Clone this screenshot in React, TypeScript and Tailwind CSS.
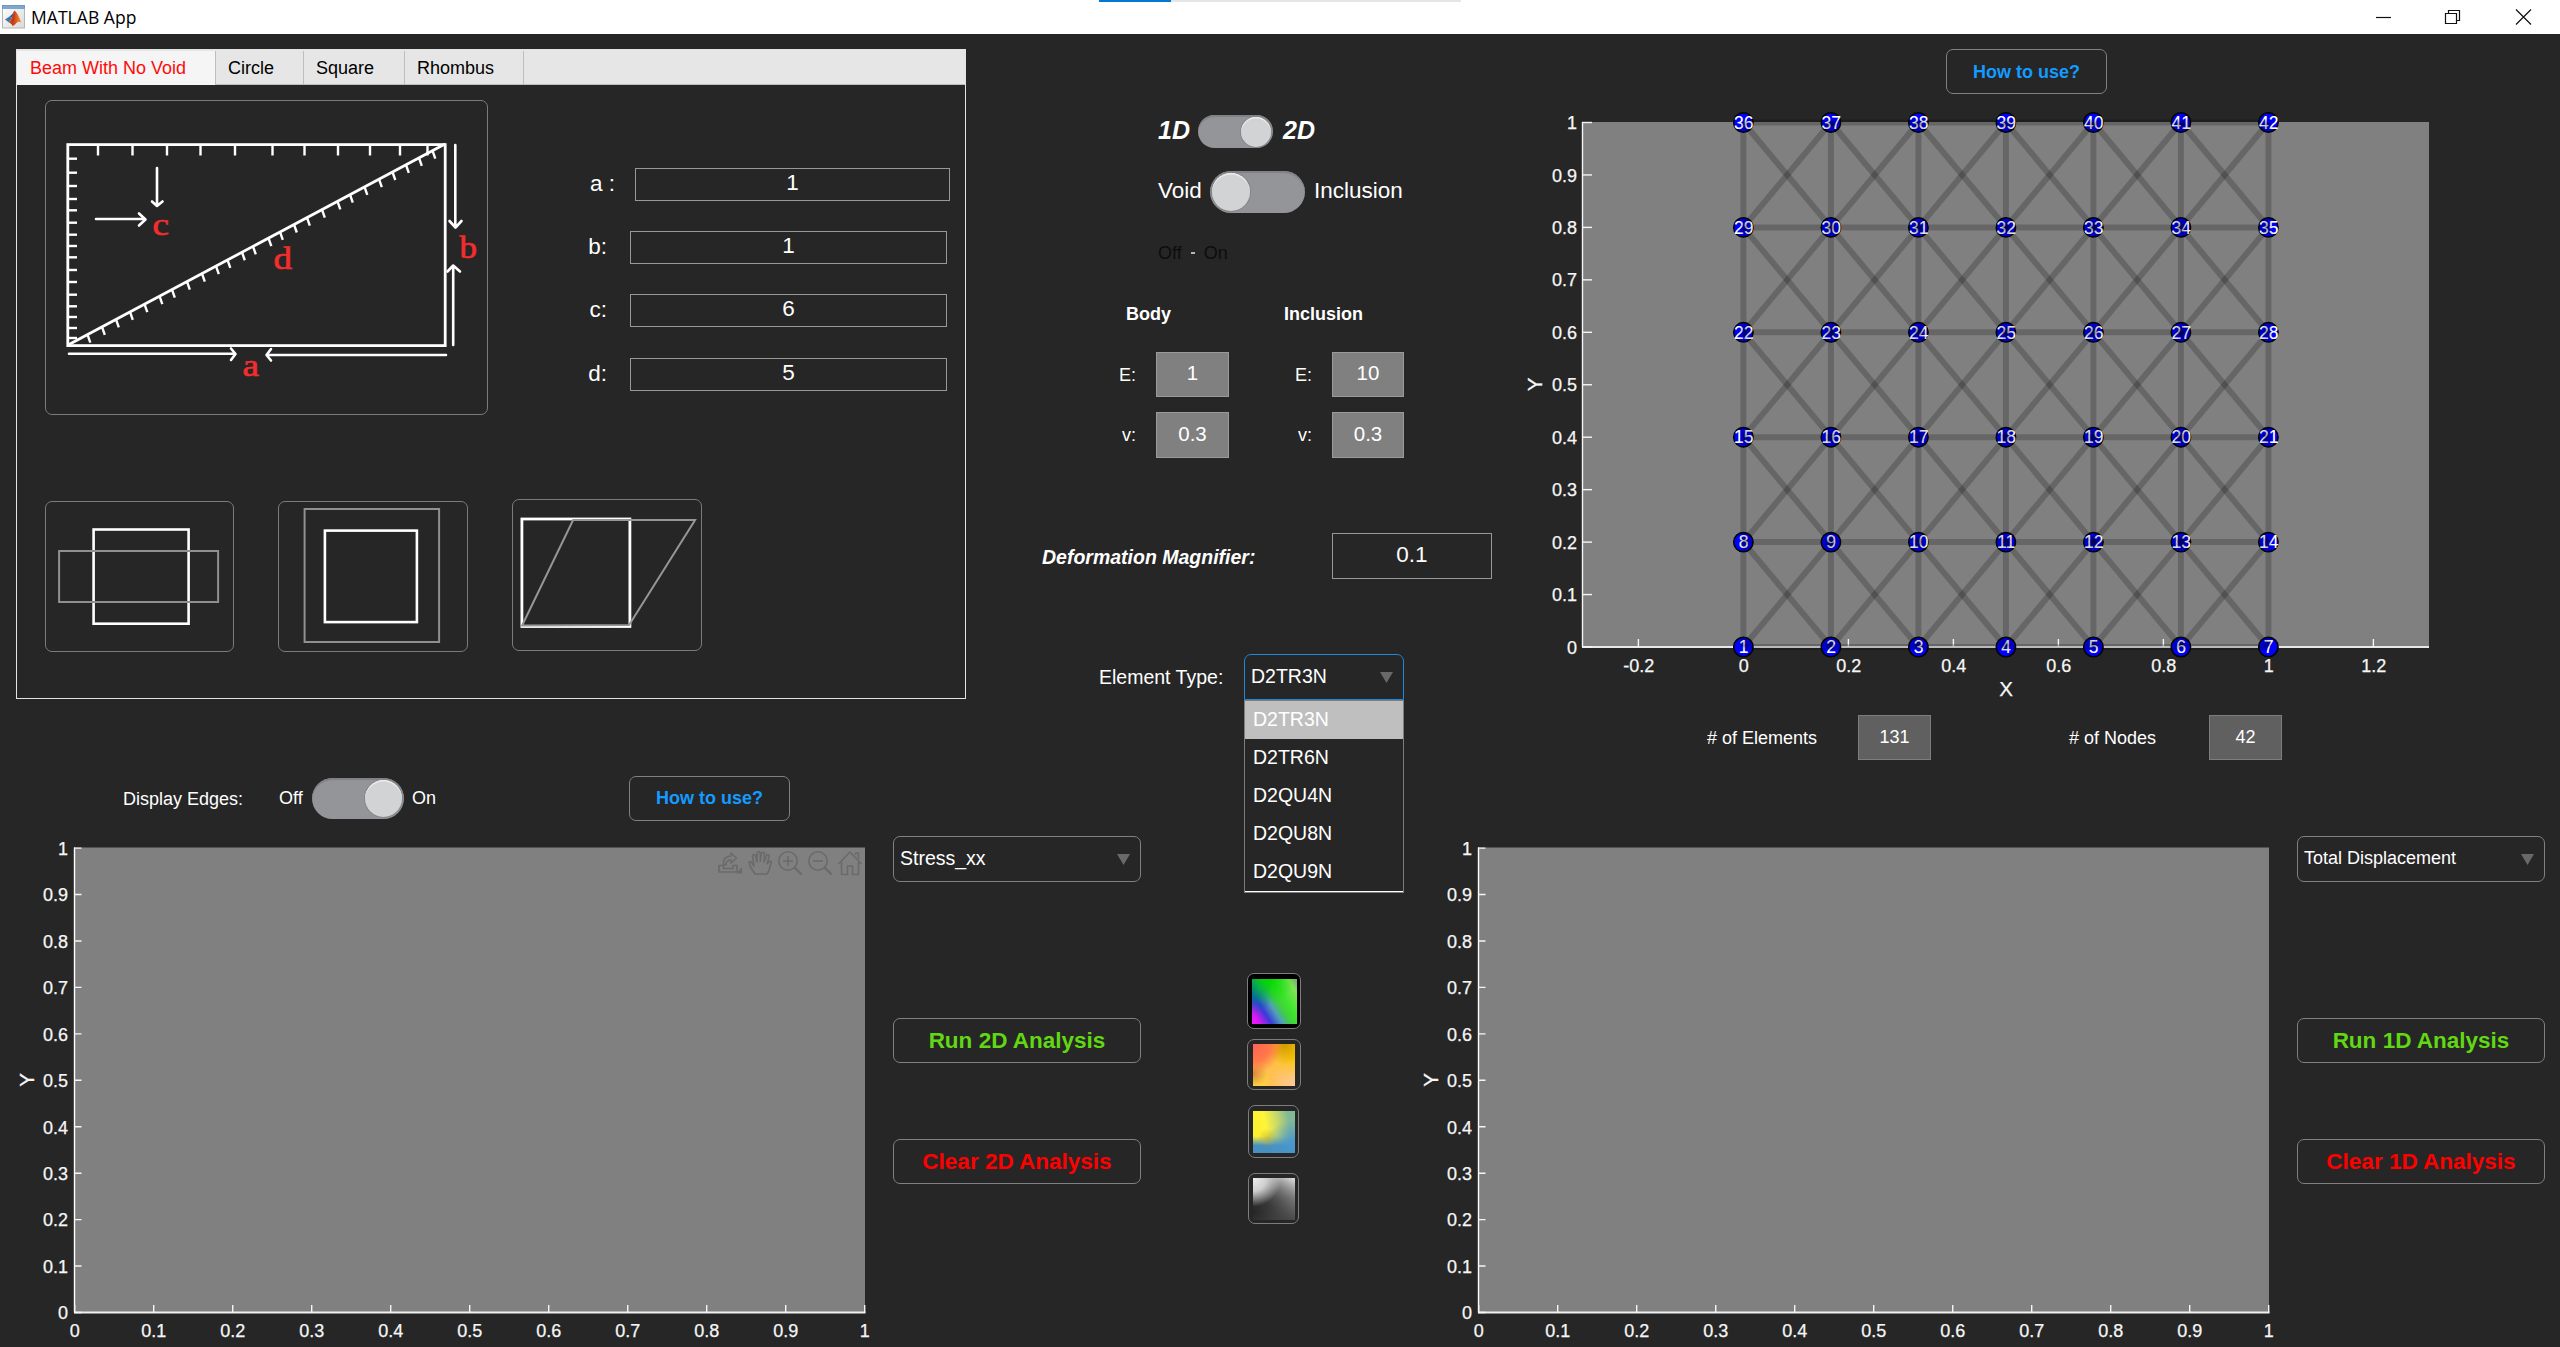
import React from "react";

const FONT = '"Liberation Sans", Arial, sans-serif';

/* ---------- window chrome ---------- */

function MatlabIcon() {
  return (
    <svg className="ml-[2px] h-[24px] w-[24px] shrink-0" viewBox="0 0 24 24">
      <defs>
        <linearGradient id="pg" x1="0" y1="0" x2="1" y2="1">
          <stop offset="0" stopColor="#ffffff" />
          <stop offset="1" stopColor="#d9d9d9" />
        </linearGradient>
        <linearGradient id="mb" x1="0" y1="0" x2="1" y2="0">
          <stop offset="0" stopColor="#f6a21c" />
          <stop offset="0.4" stopColor="#d2421c" />
          <stop offset="1" stopColor="#f39a2b" />
        </linearGradient>
      </defs>
      <rect x="0.5" y="0.5" width="22" height="22.5" fill="url(#pg)" stroke="#b5b5b5" />
      <rect x="0.5" y="0.5" width="22" height="3" fill="#79a8d2" stroke="#5b8dbb" strokeWidth="0.6" />
      <path d="M3 14.5 L7.5 11.5 L10 13 L7 17.5 Z" fill="#3a78b5" />
      <path d="M7.5 11.5 Q10.5 10 12.5 5.5 L10.5 13 Z" fill="#2c5f94" />
      <path d="M7 17.5 Q9.5 14.5 12.5 5.5 Q15 6.5 19.5 18 Q16.5 15.5 14.5 18 Q12.5 20.5 10.8 21 Q9.6 18 7 17.5Z" fill="url(#mb)" />
      <path d="M12.5 5.5 Q13 12 10.8 21 Q9.6 18 7 17.5 Q10.5 14 12.5 5.5Z" fill="#b5301a" opacity="0.75" />
    </svg>
  );
}

function TitleBar() {
  return (
    <header className="relative flex h-[34px] shrink-0 items-center bg-white text-black">
      <MatlabIcon />
      <span
        className="ml-[5px] text-[17.5px] leading-[34px] tracking-[0.05px]"
        style={{ fontFamily: '"Open Sans", "Noto Sans", sans-serif' }}
      >
        MATLAB App
      </span>
      <div className="absolute left-[1099px] top-0 flex h-[2px] w-[362px] bg-[#e5e5e5]">
        <div className="w-[72px] bg-[#0078d7]" />
      </div>
      <div className="ml-auto flex h-[34px] items-center">
        <svg className="h-[34px] w-[200px]" viewBox="2360 0 200 34" fill="none" stroke="#111" strokeWidth="1.2">
          <path d="M2376 17.5H2391" />
          <path d="M2445.5 13.5H2456.5V23.5H2445.5Z M2448.5 13.5V10.5H2459.5V20.5H2456.5" />
          <path d="M2516 9.5L2531 24.5M2531 9.5L2516 24.5" />
        </svg>
      </div>
    </header>
  );
}

/* ---------- shared controls ---------- */

function ActionButton({ children, className }: { children: React.ReactNode; className: string }) {
  return (
    <button
      className={`flex h-[45px] items-center justify-center rounded-[7px] border border-[#808080] font-bold ${className}`}
    >
      {children}
    </button>
  );
}

function Triangle({ className = "" }: { className?: string }) {
  return (
    <svg className={`h-[11px] w-[13px] ${className}`} viewBox="0 0 13 11">
      <path d="M0 0H13L6.5 11Z" fill="#696969" />
    </svg>
  );
}

function Toggle({ on, track, knob }: { on: boolean; track: string; knob: string }) {
  return (
    <div
      className={`flex shrink-0 items-center rounded-full bg-[#949599] px-[2px] shadow-[inset_0_2px_1px_#808184] ${track} ${on ? "justify-end" : "justify-start"}`}
    >
      <div className={`rounded-full bg-[#d2d3d5] shadow-[inset_0_1.5px_0.5px_#ececec,0_0_0_1px_#85868a] ${knob}`} />
    </div>
  );
}

function ValueBox({ value, className }: { value: string; className: string }) {
  return <div className={`flex shrink-0 items-center justify-center border ${className}`}>{value}</div>;
}

/* ---------- geometry panel ---------- */

const topTicks = [98, 132.5, 167, 200.5, 235, 272.5, 304.5, 338, 370, 400, 427.5];
const leftTicks = [158.7, 172.7, 186, 199, 210.3, 222.7, 234.7, 246, 257.3, 270, 282, 294.7, 306.3, 317, 328, 338];
const diagonalTicks = [
  87.5, 102, 116, 130, 144.5, 159.5, 172, 187, 202, 216, 227.5, 242, 253, 268.5, 280, 294, 307, 322, 337.5, 350, 364.5,
  379, 392.5, 406, 419, 432.5,
];

function BeamDiagram() {
  const diagY = (x: number) => 345 - ((x - 68) * 201) / 377;
  return (
    <svg className="h-full w-full" viewBox="46 101 441 313" fill="none" stroke="#fff" strokeWidth="2.4">
      <rect x="67.8" y="144.6" width="377.4" height="201" strokeWidth="2.8" />
      <path d="M68 345L445 144" strokeWidth="2.8" />
      {topTicks.map((x) => (
        <path key={x} d={`M${x} 145V155.5`} />
      ))}
      {leftTicks.map((y) => (
        <path key={y} d={`M68 ${y}H77`} />
      ))}
      {diagonalTicks.map((x) => (
        <path key={x} d={`M${x} ${diagY(x)}l2.8 8`} />
      ))}
      <g strokeWidth="2.6" strokeLinecap="round" strokeLinejoin="round">
        <path d="M157 168V205M152 201.5L157 206L162.5 201.5" />
        <path d="M96 219H145M139 213.5L145.5 219.5L139 225.5" />
        <path d="M455.3 145V227M449.5 221L455.5 227.5L461.5 221" />
        <path d="M453.2 345V266M447.5 271.5L453.2 265.5L460 271.5" />
        <path d="M69 353.7H234M231 348.5L235.5 354L231 360" />
        <path d="M446 355H268M271 349L266.5 355L271 360.5" />
      </g>
      <g fill="#f22d2d" stroke="#f22d2d" strokeWidth="0.7" fontFamily='"Liberation Serif", serif' fontSize="32">
        <text x="152.5" y="234.5" textLength="16.5" lengthAdjust="spacingAndGlyphs">c</text>
        <text x="273.5" y="268.5" textLength="18.5" lengthAdjust="spacingAndGlyphs">d</text>
        <text x="459.5" y="257.5" textLength="17.5" lengthAdjust="spacingAndGlyphs">b</text>
        <text x="242.5" y="376" textLength="16.5" lengthAdjust="spacingAndGlyphs">a</text>
      </g>
    </svg>
  );
}

const card = "rounded-[7px] border border-[#7b7b7b]";

function GeometryPanel() {
  const fields = [
    { label: "a :", value: "1", row: "", labelBox: "w-[127px]", box: "ml-[20px] w-[315px]" },
    { label: "b:", value: "1", row: "mt-[30px]", labelBox: "w-[119px]", box: "ml-[23px] w-[317px]" },
    { label: "c:", value: "6", row: "mt-[30px]", labelBox: "w-[119px]", box: "ml-[23px] w-[317px]" },
    { label: "d:", value: "5", row: "mt-[31px]", labelBox: "w-[119px]", box: "ml-[23px] w-[317px]" },
  ];
  return (
    <section className="ml-[16px] mt-[15px] h-[650px] w-[950px] shrink-0 border border-[#e3e3e3]">
      <div className="flex h-[35px] border-b border-[#bdbdbd] bg-[#e6e6e6] pt-px text-[18px] text-black">
        <div className="-mb-px flex w-[198px] items-center bg-[#f5f5f5] pl-[13px] pt-px">
          <span className="text-[#ff0a0a]">Beam With No Void</span>
        </div>
        <div className="flex w-[89px] items-center border-x border-[#bdbdbd] pl-[12px] pt-px">Circle</div>
        <div className="flex w-[101px] items-center border-r border-[#bdbdbd] pl-[12px] pt-px">Square</div>
        <div className="flex w-[119px] items-center border-r border-[#bdbdbd] pl-[12px] pt-px">Rhombus</div>
      </div>
      <div className="flex pt-[15px]">
        <div className={`ml-[28px] h-[315px] w-[443px] shrink-0 ${card}`}>
          <BeamDiagram />
        </div>
        <div className="flex flex-col pt-[68px] text-[22.5px]">
          {fields.map((f) => (
            <div key={f.label} className={`flex h-[33px] items-center ${f.row}`}>
              <span className={`pb-[1px] text-right ${f.labelBox}`}>{f.label}</span>
              <ValueBox value={f.value} className={`h-[33px] border-[#989898] pb-[3px] ${f.box}`} />
            </div>
          ))}
        </div>
      </div>
      <div className="mt-[84px] flex items-start">
        <div className={`ml-[28px] mt-[2px] h-[151px] w-[189px] ${card}`}>
          <svg className="h-full w-full" viewBox="46.6 502 187 149" fill="none">
            <rect x="94.2" y="529.5" width="95" height="94.2" stroke="#fff" strokeWidth="2.6" />
            <rect x="59.7" y="551" width="159" height="51" stroke="#909090" strokeWidth="2" />
          </svg>
        </div>
        <div className={`ml-[44px] mt-[2px] h-[151px] w-[190px] ${card}`}>
          <svg className="h-full w-full" viewBox="279.4 502 188 149" fill="none">
            <rect x="305" y="509" width="134.5" height="133" stroke="#909090" strokeWidth="2" />
            <rect x="325.3" y="530.6" width="92" height="91.5" stroke="#fff" strokeWidth="2.6" />
          </svg>
        </div>
        <div className={`ml-[44px] h-[152px] w-[190px] ${card}`}>
          <svg className="h-full w-full" viewBox="513.4 500 188 150" fill="none">
            <rect x="522.3" y="519" width="108" height="107.5" stroke="#fff" strokeWidth="2.8" />
            <path d="M522.5 625.5L573.5 520H695.5L629.5 625Z" stroke="#969696" strokeWidth="2" />
          </svg>
        </div>
      </div>
    </section>
  );
}

/* ---------- centre settings ---------- */

function MaterialRow({ label, left, right, className }: { label: string; left: string; right: string; className: string }) {
  const box = "h-full border-[#9a9a9a] bg-[#808080] pb-[2px] text-[20.5px]";
  return (
    <div className={`flex items-center text-[18px] ${className}`}>
      <span className="w-[170px] pt-px text-right">{label}</span>
      <ValueBox value={left} className={`ml-[20px] w-[73px] ${box}`} />
      <span className="w-[83px] pt-px text-right">{label}</span>
      <ValueBox value={right} className={`ml-[20px] w-[72px] ${box}`} />
    </div>
  );
}

function SettingsColumn() {
  const options = ["D2TR3N", "D2TR6N", "D2QU4N", "D2QU8N", "D2QU9N"];
  return (
    <section className="flex w-[534px] shrink-0 flex-col pt-[81px]">
      <div className="flex h-[33px] items-center text-[25px] font-bold italic">
        <span className="ml-[192px] w-[40px] pb-px">1D</span>
        <Toggle on track="h-[33px] w-[75px]" knob="h-[30px] w-[30px]" />
        <span className="ml-[10px] pb-px">2D</span>
      </div>
      <div className="mt-[23px] flex h-[42px] items-center text-[22.5px]">
        <span className="ml-[192px] w-[52px] pb-[2px]">Void</span>
        <Toggle on={false} track="h-[42px] w-[95px]" knob="h-[38px] w-[38px]" />
        <span className="ml-[9px] pb-[2px]">Inclusion</span>
      </div>
      <div className="mt-[30px] flex h-[20px] items-center text-[18px] text-[#0d0d0d]">
        <span className="ml-[192px]">Off</span>
        <div className="ml-[9px] h-[2px] w-[4px] bg-[#b4b4b6]" />
        <span className="ml-[9px]">On</span>
      </div>
      <div className="mt-[41px] flex h-[20px] items-center text-[18px] font-bold">
        <span className="ml-[160px] w-[158px]">Body</span>
        <span>Inclusion</span>
      </div>
      <MaterialRow label="E:" left="1" right="10" className="mt-[28px] h-[45px]" />
      <MaterialRow label="v:" left="0.3" right="0.3" className="mt-[15px] h-[46px]" />
      <div className="mt-[75px] flex h-[46px] items-center">
        <span className="ml-[76px] w-[290px] pt-[3px] text-[19.5px] font-bold italic">Deformation Magnifier:</span>
        <ValueBox value="0.1" className="h-[46px] w-[160px] border-[#989898] pb-[2px] text-[22.5px]" />
      </div>
      <div className="mt-[75px] flex h-[46px] items-center text-[19.5px]">
        <span className="ml-[133px] w-[145px] pt-[2px]">Element Type:</span>
        <div className="relative h-[46px] w-[160px]">
          <div className="flex h-[46px] items-center justify-between rounded-t-[7px] border border-[#2187d8] pl-[6px] pr-[10px]">
            <span>D2TR3N</span>
            <Triangle />
          </div>
          <ul className="absolute left-0 top-[46px] z-10 h-[193px] w-[160px] border border-[#7d7d7d] bg-[#262626]">
            {options.map((o, i) => (
              <li key={o} className={`flex h-[38px] items-center pb-px pl-[8px] ${i === 0 ? "bg-[#bfbfbf]" : ""}`}>
                {o}
              </li>
            ))}
            <li className="h-px bg-white" />
          </ul>
        </div>
      </div>
    </section>
  );
}

/* ---------- charts ---------- */

function TickText({ x, y, anchor, children }: { x: number; y: number; anchor: "end" | "middle"; children: React.ReactNode }) {
  return (
    <text x={x} y={y} textAnchor={anchor} fill="#f6f6f6" stroke="#f6f6f6" strokeWidth="0.25" fontSize="18" fontFamily={FONT}>
      {children}
    </text>
  );
}

const tenths = [0, 0.1, 0.2, 0.3, 0.4, 0.5, 0.6, 0.7, 0.8, 0.9, 1];

function MeshChart() {
  const px = (v: number) => 1743.4 + v * 525;
  const py = (v: number) => 647 - v * 524.5;
  const nodes: { id: number; x: number; y: number }[] = [];
  const edges: number[][] = [];
  for (let r = 0; r < 6; r++) {
    for (let c = 0; c < 7; c++) {
      const x = px(c / 6);
      const y = py(r / 5);
      nodes.push({ id: r * 7 + c + 1, x, y });
      if (c < 6) edges.push([x, y, px((c + 1) / 6), y]);
      if (r < 5) edges.push([x, y, x, py((r + 1) / 5)]);
      if (c < 6 && r < 5) {
        edges.push([x, y, px((c + 1) / 6), py((r + 1) / 5)]);
        edges.push([px((c + 1) / 6), y, x, py((r + 1) / 5)]);
      }
    }
  }
  return (
    <svg className="h-[609px] w-[1060px] shrink-0" viewBox="1500 94 1060 609">
      <rect x="1582" y="122" width="847" height="525" fill="#808080" />
      <path d="M1582.5 122V647" stroke="#f5f5f5" strokeWidth="1.4" />
      <path d="M1582 647H2429" stroke="#e8e8e8" strokeWidth="1.8" />
      {tenths.map((t) => (
        <g key={t}>
          <path d={`M1582 ${py(t)}h10`} stroke="#f5f5f5" strokeWidth="1.4" />
          <TickText x={1577} y={py(t) + 6.6} anchor="end">{t}</TickText>
        </g>
      ))}
      {[-0.2, 0, 0.2, 0.4, 0.6, 0.8, 1, 1.2].map((t) => (
        <g key={t}>
          <path d={`M${px(t)} 647v-8`} stroke="#f5f5f5" strokeWidth="1.4" />
          <TickText x={px(t) + 0.4} y={671.5} anchor="middle">{t}</TickText>
        </g>
      ))}
      <text x="2006" y="696" textAnchor="middle" fill="#f6f6f6" stroke="#f6f6f6" strokeWidth="0.25" fontSize="20.5" fontFamily={FONT}>X</text>
      <text transform="translate(1542 384.5) rotate(-90)" textAnchor="middle" fill="#f6f6f6" stroke="#f6f6f6" strokeWidth="0.25" fontSize="20.5" fontFamily={FONT}>Y</text>
      {nodes.map((n) => (
        <g key={n.id}>
          <circle cx={n.x} cy={n.y} r="9.7" fill="#0000ff" stroke="#000" strokeWidth="1.5" />
          <text x={n.x + 0.3} y={n.y + 6.2} textAnchor="middle" fill="#fff" fontSize="17.5" fontFamily={FONT}>{n.id}</text>
        </g>
      ))}
      {edges.map((e, i) => (
        <path key={i} d={`M${e[0]} ${e[1]}L${e[2]} ${e[3]}`} stroke="#000" strokeOpacity="0.2" strokeWidth="6" />
      ))}
      {nodes.map((n) => (
        <text key={n.id} aria-hidden x={n.x + 0.3} y={n.y + 6.2} textAnchor="middle" fill="#fff" fillOpacity="0.35" fontSize="17.5" fontFamily={FONT}>
          {n.id}
        </text>
      ))}
    </svg>
  );
}

function ChartToolbar() {
  return (
    <g fill="none" stroke="#6a6a6a" strokeWidth="1.6" strokeLinejoin="round">
      <path d="M719 865.5H723.5V868.5H733V865.5H737V872H719Z" />
      <path d="M723.5 864C723 858.5 727 856 731 856V853L736.5 858L731 863V860C727.5 860 726 862 726 865Z" />
      <path d="M742 867V873.5H736Z" fill="#6a6a6a" stroke="none" />
      <path d="M755 874L750.5 867L749 862.5C749.5 861 751 861.5 752 863L754 866L752.5 856C753 854 755 854 755.5 856L757 862V853.5C757.5 851 760 851 760.3 853.5V861.5L761.5 853.5C762 851.5 764.5 852 764.5 854L764 862L766.5 855.5C767 854 769.5 854.5 769 857L767 864L769.5 861.5C771 860.5 772 862 771 863.5C770 866 769 872 767 874Z" />
      <circle cx="788" cy="861" r="9.2" />
      <path d="M783 861H793M788 856V866" />
      <path d="M794.5 867.5L801.5 874.5" strokeWidth="2.4" />
      <circle cx="818" cy="861" r="9.2" />
      <path d="M813 861H823" />
      <path d="M824.5 867.5L831.5 874.5" strokeWidth="2.4" />
      <path d="M838.5 864L850 852L861.5 864M841.5 862V874.5H847.5V866H852.5V874.5H858.5V862M855.5 855V853H858.5V859" />
    </g>
  );
}

function EmptyChart({ toolbar = false }: { toolbar?: boolean }) {
  const px = (v: number) => 74.7 + v * 790;
  const py = (v: number) => 1312.5 - v * 464.4;
  return (
    <svg className="h-[526px] w-[893px] shrink-0" viewBox="0 821 893 526">
      <rect x="74" y="847.5" width="791" height="465" fill="#808080" />
      <path d="M74.5 847.5V1312.5" stroke="#fff" strokeWidth="1.4" />
      <path d="M74 1312.5H865.5" stroke="#f0f0f0" strokeWidth="1.8" />
      {tenths.map((t) => (
        <g key={t}>
          <path d={`M74 ${py(t)}h7.5M${px(t)} 1312.5v-7.5`} stroke="#f5f5f5" strokeWidth="1.4" />
          <TickText x={68} y={py(t) + 6.8} anchor="end">{t}</TickText>
          <TickText x={px(t)} y={1337} anchor="middle">{t}</TickText>
        </g>
      ))}
      <text transform="translate(34 1080) rotate(-90)" textAnchor="middle" fill="#f6f6f6" stroke="#f6f6f6" strokeWidth="0.25" fontSize="20.5" fontFamily={FONT}>Y</text>
      {toolbar && <ChartToolbar />}
    </svg>
  );
}

function MeshColumn() {
  return (
    <section className="flex w-[1060px] shrink-0 flex-col pt-[15px]">
      <ActionButton className="ml-[446px] w-[161px] pt-px text-[18px] text-[#149bff]">How to use?</ActionButton>
      <MeshChart />
      <div className="mt-[12px] flex h-[45px] items-center text-[18px]">
        <span className="ml-[207px] w-[151px] pt-[2px]"># of Elements</span>
        <ValueBox value="131" className="h-full w-[73px] border-[#7d7d7d] bg-[#606060]" />
        <span className="ml-[138px] w-[140px] pt-[2px]"># of Nodes</span>
        <ValueBox value="42" className="h-full w-[73px] border-[#7d7d7d] bg-[#606060]" />
      </div>
    </section>
  );
}

/* ---------- analysis area ---------- */

function AnalysisControls({ kind, option, optionClass }: { kind: string; option: string; optionClass: string }) {
  return (
    <div className="flex w-[248px] shrink-0 flex-col pt-[15px]">
      <div className={`flex h-[46px] items-center justify-between rounded-[7px] border border-[#808080] pl-[6px] pr-[10px] ${optionClass}`}>
        <span className="pb-px">{option}</span>
        <Triangle />
      </div>
      <ActionButton className="mt-[136px] w-[248px] text-[22.5px] text-[#61d813]">Run {kind} Analysis</ActionButton>
      <ActionButton className="mt-[76px] w-[248px] text-[22.5px] text-[#ff0000]">Clear {kind} Analysis</ActionButton>
    </div>
  );
}

function Swatches() {
  const frame = "flex items-center justify-center rounded-[7px] border border-[#7d7d7d]";
  return (
    <div className="flex w-[263px] shrink-0 flex-col pl-[106px] pt-[209px]">
      <div className={`${frame} h-[56px] w-[54px] bg-black`}>
        <div className="h-[45px] w-[45px] bg-[linear-gradient(58deg,#ff14ff_0%,#d01cf0_12%,#3a3ad8_27%,#50a0b8_42%,#3fd040_54%,#3ee52c_66%,#7fe555_88%,#7f9f80_100%)]">
          <div className="h-full w-full bg-[radial-gradient(circle_at_35%_0%,#00d800_0%,transparent_50%),radial-gradient(circle_at_0%_35%,#0060b0_0%,transparent_38%),radial-gradient(circle_at_0%_0%,#00a060_0%,transparent_35%)]" />
        </div>
      </div>
      <div className={`${frame} mt-[10px] h-[51px] w-[54px]`}>
        <div className="h-[42px] w-[42px] bg-[radial-gradient(circle_at_0%_0%,#ff5f58_0%,#ff7a48_30%,transparent_50%),radial-gradient(circle_at_75%_0%,#d09a00_0%,transparent_38%),radial-gradient(circle_at_0%_70%,#d8843c_0%,transparent_28%),radial-gradient(circle_at_100%_100%,#ffc8a0_0%,transparent_45%),radial-gradient(circle_at_0%_100%,#ffe040_0%,transparent_35%),linear-gradient(60deg,#ffc04c_0%,#ffc04c_50%,#f8c800_90%)]" />
      </div>
      <div className={`${frame} ml-px mt-[15px] h-[53px] w-[51px]`}>
        <div className="h-[42px] w-[42px] bg-[radial-gradient(ellipse_at_100%_75%,#4898d0_0%,transparent_50%),radial-gradient(ellipse_at_35%_64%,rgba(184,168,56,0.55)_0%,transparent_26%),linear-gradient(0deg,#4890c0_0%,#4890c0_18%,transparent_40%),linear-gradient(80deg,#ffee28_0%,#fff43a_35%,#c8d868_60%,#80b898_85%)]" />
      </div>
      <div className={`${frame} ml-px mt-[15px] h-[51px] w-[51px]`}>
        <div className="h-[42px] w-[42px] bg-[radial-gradient(ellipse_at_0%_0%,#ededed_0%,#d0d0d0_22%,transparent_48%),radial-gradient(circle_at_0%_80%,#262626_0%,#383838_30%,transparent_95%),linear-gradient(0deg,#505050_0%,#8a8a8a_50%,#d8d8d8_100%)]" />
      </div>
    </div>
  );
}

export default function App() {
  return (
    <div
      className="flex h-[1347px] w-[2560px] flex-col overflow-hidden bg-[#262626] text-white"
      style={{ fontFamily: FONT }}
    >
      <TitleBar />
      <div className="flex h-[730px] shrink-0">
        <GeometryPanel />
        <SettingsColumn />
        <MeshColumn />
      </div>
      <div className="flex h-[583px] shrink-0">
        <div className="flex w-[1141px] shrink-0 flex-col pt-[12px]">
          <div className="flex h-[45px] items-center text-[18px]">
            <span className="ml-[123px] w-[156px] pt-px">Display Edges:</span>
            <span className="w-[33px] pb-px">Off</span>
            <Toggle on track="h-[41px] w-[92px]" knob="h-[37px] w-[37px]" />
            <span className="ml-[8px] pb-px">On</span>
            <ActionButton className="ml-[193px] w-[161px] text-[18px] text-[#149bff]">How to use?</ActionButton>
          </div>
          <div className="flex">
            <EmptyChart toolbar />
            <AnalysisControls kind="2D" option="Stress_xx" optionClass="text-[19.5px]" />
          </div>
        </div>
        <Swatches />
        <div className="flex pt-[57px]">
          <EmptyChart />
          <AnalysisControls kind="1D" option="Total Displacement" optionClass="text-[18px]" />
        </div>
      </div>
    </div>
  );
}
